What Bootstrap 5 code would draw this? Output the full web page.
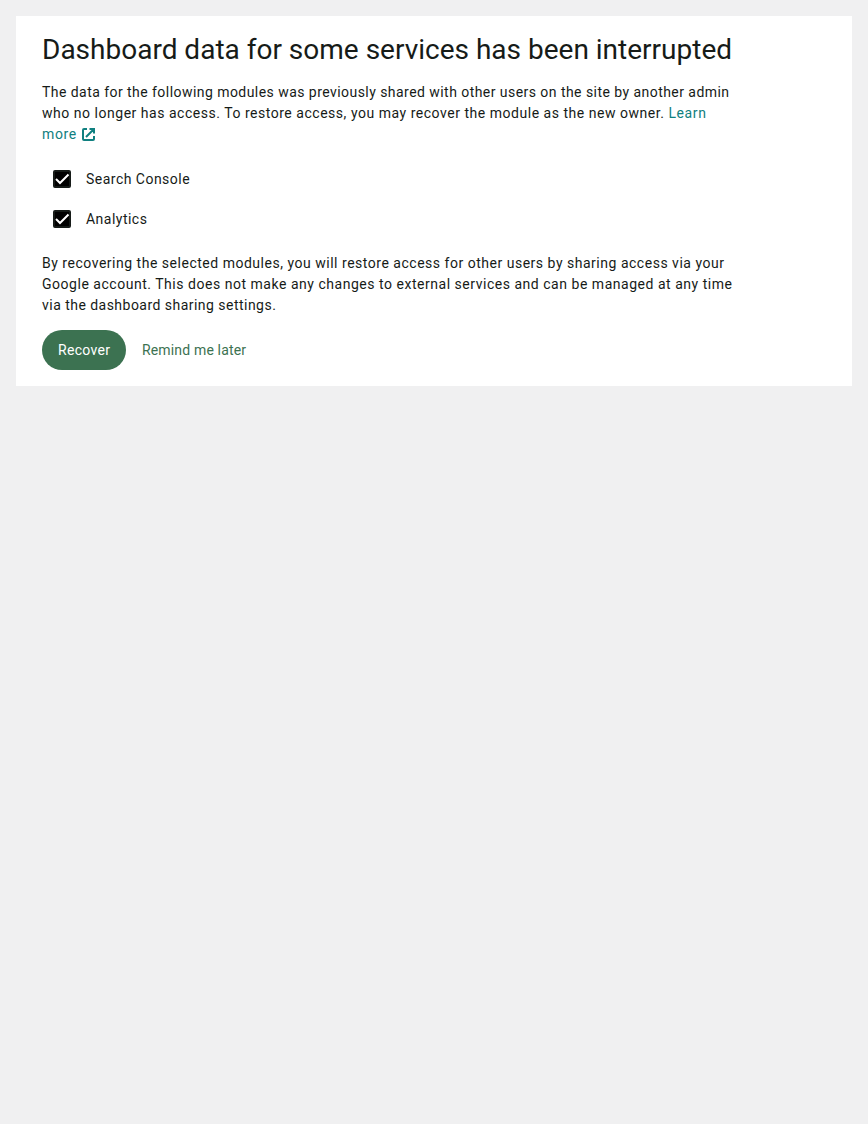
<!DOCTYPE html>
<html lang="en">
<head>
<meta charset="utf-8">
<meta name="viewport" content="width=device-width, initial-scale=1">
<title>Module recovery</title>
<link rel="stylesheet" href="https://cdn.jsdelivr.net/npm/bootstrap@5.3.0/dist/css/bootstrap.min.css">
<style>
body{background:#f0f0f1;color:#161b18;font:14px/21px Roboto,sans-serif}
.notice{background:#fff;height:370px;padding:16px 26px}
.notice-title{font-size:28px;line-height:36px;font-weight:400;margin-bottom:14px;white-space:nowrap}
.copy{white-space:nowrap;letter-spacing:.515px}
.first-line{letter-spacing:.45px}
.wide-line{letter-spacing:.525px}
.last-line{letter-spacing:.47px}
.learn{color:#108080;letter-spacing:.6px}
.learn svg{margin-left:1px;vertical-align:-2px}
.modules{padding-left:11px;margin:24px 0 23px;gap:19px}
.modules .form-check-input{width:18px;height:18px;margin:-2px 0 0;float:none;border:2px solid #161b18;border-radius:2px;background-color:#000;background-size:18px;background-position:center;
background-image:url("data:image/svg+xml,%3Csvg xmlns='http://www.w3.org/2000/svg' viewBox='0 0 18 18'%3E%3Cpath d='M3 9 7 13 15.5 4.5' fill='none' stroke='%23fff' stroke-width='2'/%3E%3C/svg%3E")}
.modules label{gap:15px;letter-spacing:.48px}
.action{--bs-btn-font-size:14px;--bs-btn-line-height:20px;--bs-btn-border-width:0;--bs-btn-padding-y:10px;--bs-btn-padding-x:16px;height:40px;letter-spacing:.16px;white-space:nowrap}
.recover{--bs-btn-bg:#3c7251;--bs-btn-color:#fff;--bs-btn-hover-bg:#32614a;--bs-btn-hover-color:#fff;width:84px;letter-spacing:.3px}
.later{--bs-btn-color:#3c7251}
.actions{margin-top:14px}
</style>
</head>
<body class="p-3">
<section class="notice">
  <h1 class="notice-title">Dashboard data for some services has been interrupted</h1>
  <p class="copy mb-0"><span class="first-line">The data for the following modules was previously shared with other users on the site by another admin</span><br><span class="wide-line">who no longer has access. To restore access, you may recover the module as the new owner. </span><a class="learn text-decoration-none" href="#">Learn<br>more
    <svg width="13" height="13" viewBox="0 0 13 13" fill="none" stroke="currentColor" stroke-width="2" aria-hidden="true"><path d="M5 1H2Q1 1 1 2V11Q1 12 2 12H11Q12 12 12 11V8M7.5 1H12V5.5M12 1 4 9"/></svg></a></p>
  <div class="modules d-flex flex-column">
    <label class="d-flex align-items-center"><input class="form-check-input" type="checkbox" checked>Search Console</label>
    <label class="d-flex align-items-center"><input class="form-check-input" type="checkbox" checked>Analytics</label>
  </div>
  <p class="copy mb-0">By recovering the selected modules, you will restore access for other users by sharing access via your<br><span class="wide-line">Google account. This does not make any changes to external services and can be managed at any time</span><br><span class="last-line">via the dashboard sharing settings.</span></p>
  <div class="actions d-flex">
    <button class="btn action recover rounded-pill" type="button">Recover</button>
    <button class="btn action later" type="button">Remind me later</button>
  </div>
</section>
<script src="https://cdn.jsdelivr.net/npm/bootstrap@5.3.0/dist/js/bootstrap.bundle.min.js"></script>
</body>
</html>
